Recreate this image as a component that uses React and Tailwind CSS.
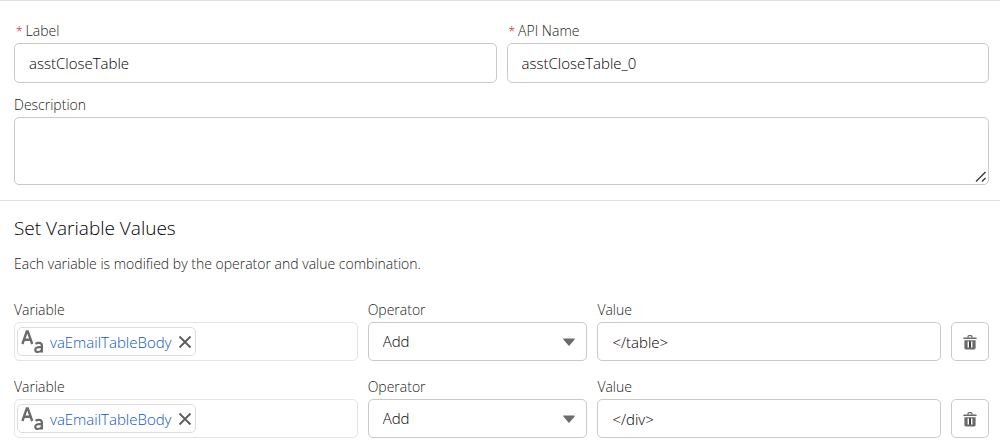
import { useState } from 'react';

const INITIAL_ROWS = [
  { id: 1, variable: 'vaEmailTableBody', operator: 'Add', value: '</table>' },
  { id: 2, variable: 'vaEmailTableBody', operator: 'Add', value: '</div>' },
];

const OPERATORS = ['Add', 'Equals'];

const LABEL = 'block text-sm leading-5 text-[#222222]';
const INPUT =
  'block w-full rounded-[5px] border border-[#c9c9c9] bg-white px-[14px] text-black outline-none focus:border-[#1b96ff]';

function Required() {
  return <span className="mr-[3px] text-xs text-[#ea001e]">*</span>;
}

function TextTypeIcon() {
  return (
    <svg viewBox="0 0 24 24" className="h-6 w-6 shrink-0" fill="none" stroke="#6b6b6b" strokeWidth="2.4" aria-hidden="true">
      <path d="M1.4 14 L5.8 1.4 H6.8 L11.2 14 M3.2 9.8 H9.4" />
      <path d="M14.6 13.8 C16 12.6 20.9 11.9 20.9 15.6 V22.6 M20.9 16.9 C17 16.9 14.2 17.6 14.2 19.8 C14.2 22.9 19.4 22.6 20.9 19.8" strokeWidth="2.2" />
    </svg>
  );
}

function TrashIcon() {
  return (
    <svg viewBox="0 0 14 16" className="h-4 w-[14px]" fill="#6b6b6b" aria-hidden="true">
      <path d="M0.9 3.6 H13.1 Q13.8 3.6 13.8 4.3 T13.1 5 H0.9 Q0.2 5 0.2 4.3 T0.9 3.6 Z" />
      <path d="M5 3.8 V2.6 Q5 1.6 6 1.6 H8 Q9 1.6 9 2.6 V3.8" fill="none" stroke="#6b6b6b" strokeWidth="1.2" />
      <path fillRule="evenodd" d="M1.4 6.2 H12.6 V14 Q12.6 15.4 11.2 15.4 H2.8 Q1.4 15.4 1.4 14 Z M4.6 7.6 V13.6 H6 V7.6 Z M8 7.6 V13.6 H9.4 V7.6 Z" />
      <path d="M6.2 7.6 H7.8 V13.6 H6.2 Z" fill="#3a3a3a" />
    </svg>
  );
}

function AssignmentRow({ row, onChange, onRemove }) {
  return (
    <div className="flex items-end gap-[10px]">
      <div className="min-w-0 flex-[344]">
        <span className={LABEL}>Variable</span>
        <div className="mt-0.5 flex h-[39px] items-center rounded-[5px] border border-[#e5e5e5] px-0.5">
          {row.variable && (
            <span className="flex h-[29px] items-center rounded-[5px] border border-[#dddddd] px-[3px]">
              <TextTypeIcon />
              <a href="#" className="ml-[5px] text-[15px] leading-5 text-[#0b55cc]">
                {row.variable}
              </a>
              <button
                type="button"
                aria-label="Clear variable"
                className="ml-[6px]"
                onClick={() => onChange({ ...row, variable: '' })}
              >
                <svg viewBox="0 0 14 14" className="h-[14px] w-[14px]" stroke="#5c5c5c" strokeWidth="1.8" aria-hidden="true">
                  <path d="M1.5 1.5 L12.5 12.5 M12.5 1.5 L1.5 12.5" />
                </svg>
              </button>
            </span>
          )}
        </div>
      </div>

      <div className="min-w-0 flex-[220]">
        <label htmlFor={`operator-${row.id}`} className={LABEL}>Operator</label>
        <div className="relative mt-0.5">
          <select
            id={`operator-${row.id}`}
            value={row.operator}
            onChange={(e) => onChange({ ...row, operator: e.target.value })}
            className={`${INPUT} h-[39px] appearance-none text-[15px]`}
          >
            {OPERATORS.map((op) => (
              <option key={op}>{op}</option>
            ))}
          </select>
          <svg viewBox="0 0 12 8" className="pointer-events-none absolute right-3 top-4 h-2 w-3" fill="#6b6b6b" aria-hidden="true">
            <path d="M0.6 0.6 H11.4 Q12.2 0.6 11.6 1.4 L6.5 7.4 Q6 8 5.5 7.4 L0.4 1.4 Q-0.2 0.6 0.6 0.6 Z" />
          </svg>
        </div>
      </div>

      <div className="min-w-0 flex-[344]">
        <label htmlFor={`value-${row.id}`} className={LABEL}>Value</label>
        <input
          id={`value-${row.id}`}
          type="text"
          value={row.value}
          onChange={(e) => onChange({ ...row, value: e.target.value })}
          className={`${INPUT} mt-0.5 h-[39px] text-[15px]`}
        />
      </div>

      <button
        type="button"
        aria-label="Delete row"
        onClick={onRemove}
        className="flex h-[39px] w-[38px] shrink-0 items-center justify-center rounded-[5px] border border-[#c9c9c9] bg-white"
      >
        <TrashIcon />
      </button>
    </div>
  );
}

export default function App() {
  const [label, setLabel] = useState('asstCloseTable');
  const [apiName, setApiName] = useState('asstCloseTable_0');
  const [description, setDescription] = useState('');
  const [rows, setRows] = useState(INITIAL_ROWS);

  return (
    <form className="border-t border-[#e0e0e0] bg-white font-['Open_Sans','Noto_Sans',sans-serif] font-light">
      <div className="border-b border-[#e0e0e0] pb-[15px] pl-[14px] pr-[11px] pt-5">
        <div className="flex gap-[10px]">
          <div className="min-w-0 flex-1">
            <label htmlFor="label" className={`${LABEL} pl-0.5`}>
              <Required />Label
            </label>
            <input
              id="label"
              type="text"
              value={label}
              onChange={(e) => setLabel(e.target.value)}
              className={`${INPUT} mt-0.5 h-10 text-[15px]`}
            />
          </div>
          <div className="min-w-0 flex-1">
            <label htmlFor="api-name" className={`${LABEL} pl-0.5`}>
              <Required />API Name
            </label>
            <input
              id="api-name"
              type="text"
              value={apiName}
              onChange={(e) => setApiName(e.target.value)}
              className={`${INPUT} mt-0.5 h-10 text-[15px]`}
            />
          </div>
        </div>

        <label htmlFor="description" className={`${LABEL} mt-3`}>Description</label>
        <div className="relative mt-0.5">
          <textarea
            id="description"
            value={description}
            onChange={(e) => setDescription(e.target.value)}
            className={`${INPUT} h-[68px] resize-y py-2 text-[15px] [&::-webkit-resizer]:bg-transparent`}
          />
          <svg viewBox="0 0 12 12" className="pointer-events-none absolute bottom-0.5 right-0.5 size-3" fill="none" stroke="#333333" strokeWidth="1.3" aria-hidden="true">
            <path d="M1 10.5 L10.5 1 M7 10.5 L10.5 7" />
          </svg>
        </div>
      </div>

      <div className="pb-3 pl-[14px] pr-[11px] pt-[15px]">
        <h2 className="text-[19px] leading-6 text-black">Set Variable Values</h2>
        <p className="mt-[14px] text-sm leading-5 text-[#222222]">
          Each variable is modified by the operator and value combination.
        </p>
        <div className="mt-[26px] flex flex-col gap-4">
          {rows.map((row) => (
            <AssignmentRow
              key={row.id}
              row={row}
              onChange={(next) => setRows(rows.map((r) => (r.id === next.id ? next : r)))}
              onRemove={() => setRows(rows.filter((r) => r.id !== row.id))}
            />
          ))}
        </div>
      </div>
    </form>
  );
}
